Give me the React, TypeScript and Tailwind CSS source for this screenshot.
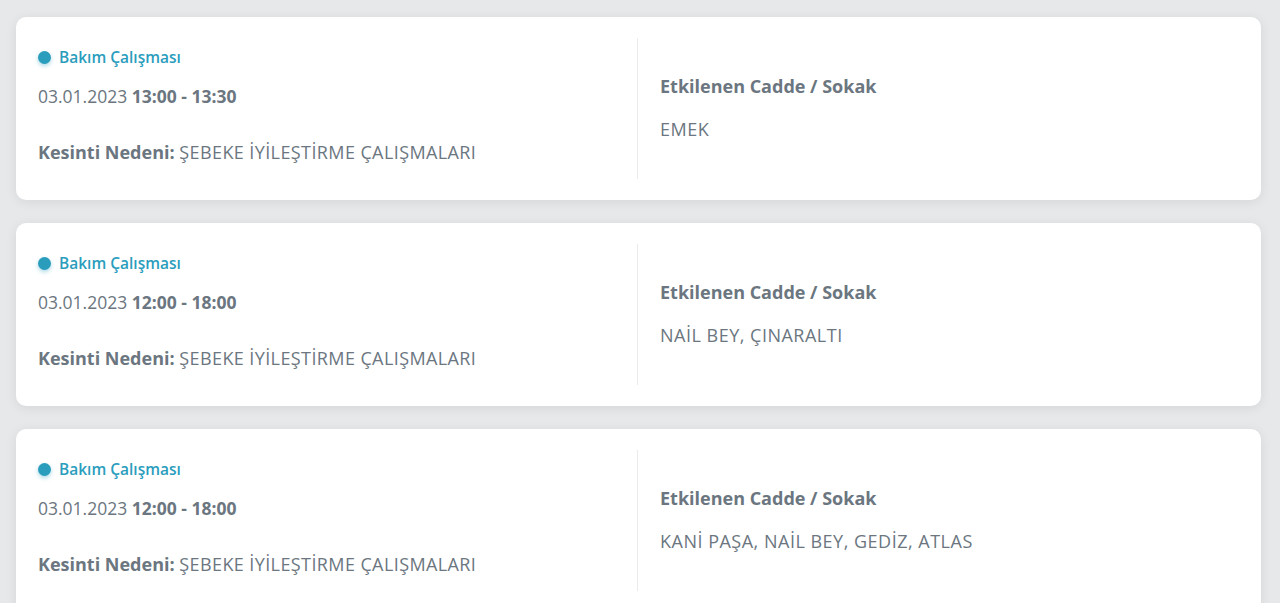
const outages = [
  { date: "03.01.2023", time: "13:00 - 13:30", reason: "ŞEBEKE İYİLEŞTİRME ÇALIŞMALARI", streets: "EMEK" },
  { date: "03.01.2023", time: "12:00 - 18:00", reason: "ŞEBEKE İYİLEŞTİRME ÇALIŞMALARI", streets: "NAİL BEY, ÇINARALTI" },
  { date: "03.01.2023", time: "12:00 - 18:00", reason: "ŞEBEKE İYİLEŞTİRME ÇALIŞMALARI", streets: "KANİ PAŞA, NAİL BEY, GEDİZ, ATLAS" },
];

function OutageCard({ date, time, reason, streets }: (typeof outages)[number]) {
  return (
    <div className="flex h-[183px] shrink-0 rounded-[10px] bg-white py-[21px] shadow-[0_2px_12px_rgba(0,0,0,0.08)]">
      <div className="flex w-[621px] shrink-0 flex-col px-[22px]">
        <div className="mt-[12px] flex items-center gap-[8px] text-[15.5px] font-semibold leading-none text-[#2a9dbd]">
          <span className="h-[13px] w-[13px] rounded-full bg-[#2a9dbd] shadow-[0_2px_4px_rgba(42,157,189,0.4)]" />
          Bakım Çalışması
        </div>
        <div className="mt-[22px] text-[17.5px] leading-none text-[#6b7680]">
          {date} <span className="font-bold">{time}</span>
        </div>
        <div className="mt-[38px] text-[18px] leading-none text-[#6b7680]">
          <span className="font-bold">Kesinti Nedeni:</span> <span className="tracking-[0.4px]">{reason}</span>
        </div>
      </div>
      <div className="flex flex-1 flex-col border-l border-[#e9ecef] px-[22px]">
        <div className="mt-[39px] text-[18px] font-bold leading-none text-[#6b7680]">Etkilenen Cadde / Sokak</div>
        <div className="mt-[25px] text-[18px] leading-none tracking-[0.5px] text-[#6b7680]">{streets}</div>
      </div>
    </div>
  );
}

export default function App() {
  return (
    <div
      className="flex h-[603px] flex-col gap-[23px] overflow-hidden bg-[#e6e8ea] pl-[16px] pr-[19px] pt-[17px]"
      style={{ fontFamily: '"Open Sans", sans-serif' }}
    >
      {outages.map((o, i) => (
        <OutageCard key={i} {...o} />
      ))}
    </div>
  );
}
